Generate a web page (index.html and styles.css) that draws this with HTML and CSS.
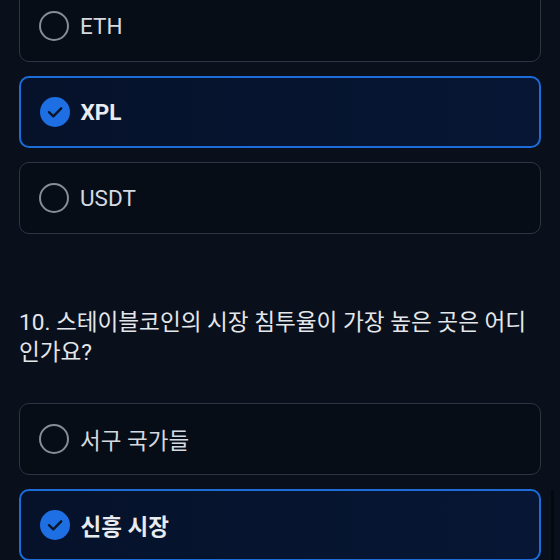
FILE: index.html
```html
<!DOCTYPE html>
<html lang="ko">
<head>
    <meta charset="UTF-8">
    <meta name="viewport" content="width=device-width, initial-scale=1.0">
    <title>Quiz</title>
    <link rel="stylesheet" href="styles.css">
</head>
<body>
    <div class="quiz">
        <!-- Question 9 (options only, scrolled) -->
        <div class="options">
            <div class="option">
                <span class="radio"></span>
                <span class="label">ETH</span>
            </div>
            <div class="option selected">
                <span class="radio">
                    <svg viewBox="0 0 30 30" width="30" height="30">
                        <circle cx="15" cy="15" r="15" fill="#1d6fe3"/>
                        <path d="M9 15.2 L13.3 19.3 L21.2 11.3" fill="none" stroke="#0b1629" stroke-width="2.4" stroke-linecap="round" stroke-linejoin="round"/>
                    </svg>
                </span>
                <span class="label">XPL</span>
            </div>
            <div class="option">
                <span class="radio"></span>
                <span class="label">USDT</span>
            </div>
        </div>

        <!-- Question 10 -->
        <p class="question">10. 스테이블코인의 시장 침투율이 가장 높은 곳은 어디 인가요?</p>
        <div class="options">
            <div class="option">
                <span class="radio"></span>
                <span class="label">서구 국가들</span>
            </div>
            <div class="option selected">
                <span class="radio">
                    <svg viewBox="0 0 30 30" width="30" height="30">
                        <circle cx="15" cy="15" r="15" fill="#1d6fe3"/>
                        <path d="M9 15.2 L13.3 19.3 L21.2 11.3" fill="none" stroke="#0b1629" stroke-width="2.4" stroke-linecap="round" stroke-linejoin="round"/>
                    </svg>
                </span>
                <span class="label">신흥 시장</span>
            </div>
        </div>
    </div>

    <div class="scrollbar"></div>
</body>
</html>
```

FILE: styles.css
```css
html, body {
    height: 100%;
}
body {
    margin: 0;
    background-color: #0a101b;
    font-family: Roboto, "Noto Sans CJK KR", sans-serif;
    color: #dfe3e8;
    overflow: hidden;
}
.quiz {
    padding: 0 19px;
    margin-top: -10px;
}
.options {
    display: flex;
    flex-direction: column;
    gap: 14px;
}
.option {
    box-sizing: border-box;
    height: 72px;
    display: flex;
    align-items: center;
    gap: 11px;
    padding: 0 19px;
    border: 1.5px solid #2d3541;
    border-radius: 10px;
    background-color: #070d17;
}
.option.selected {
    border: 2px solid #1c6cd9;
    background: linear-gradient(90deg, #06122a, #061634);
    padding: 0 18.5px;
}
.radio {
    box-sizing: border-box;
    width: 30px;
    height: 30px;
    border: 2px solid #868d97;
    border-radius: 50%;
    flex-shrink: 0;
}
.selected .radio {
    border: none;
}
.radio svg {
    display: block;
}
.label {
    font-size: 22.5px;
    color: #d5dae1;
}
.selected .label {
    font-weight: bold;
    color: #e8ebef;
}
.question {
    margin: 74px 0 35px;
    font-size: 22.6px;
    line-height: 30px;
    color: #e4e7eb;
    word-break: keep-all;
}
.scrollbar {
    position: fixed;
    right: 6px;
    top: 490px;
    bottom: 0;
    width: 3px;
    background-color: #05080e;
}
```
